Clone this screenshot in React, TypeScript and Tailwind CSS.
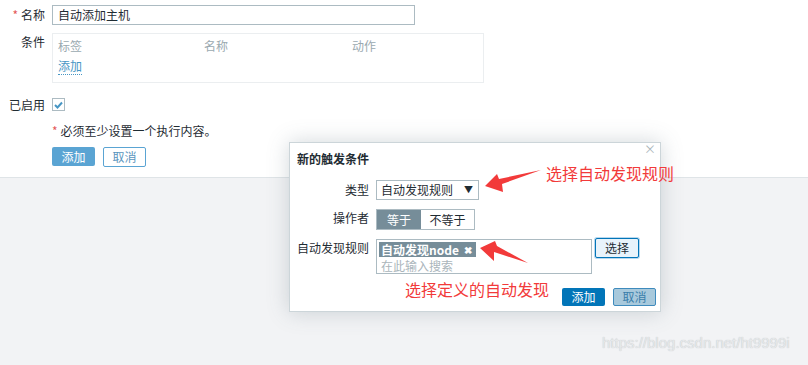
import React from 'react';

const font = { fontFamily: '"Noto Sans CJK SC", "Liberation Sans", sans-serif' };

function Label({ children, required }: { children: React.ReactNode; required?: boolean }) {
  return (
    <div className="text-right whitespace-nowrap text-[12px] leading-[14px] text-[#1f2c33]">
      {required && <span className="text-[#e45959] mr-[3px]">*</span>}
      {children}
    </div>
  );
}

function MainForm() {
  return (
    <div className="bg-white border-b border-[#dfe4e7] h-[178px] pt-[5px]">
      <div className="grid grid-cols-[45px_1fr] gap-x-[7px]">
        <div className="pt-[3px]">
          <Label required>名称</Label>
        </div>
        <div className="w-[363px] h-[20px] border border-[#acbbc2] px-[5px] text-[12px] leading-[18px] text-[#1f2c33]">
          自动添加主机
        </div>

        <div className="pt-[2px] mt-[8px]">
          <Label>条件</Label>
        </div>
        <div className="mt-[8px] w-[432px] h-[50px] border border-[#ebeef0] px-[5px] pt-[5px]">
          <div className="flex text-[12px] leading-[14px] text-[#9aa9b0]">
            <span className="w-[146px]">标签</span>
            <span className="w-[148px]">名称</span>
            <span>动作</span>
          </div>
          <div className="mt-[6px] text-[12px] leading-[14px]">
            <span className="text-[#4796c4] border-b border-dotted border-[#4796c4]">添加</span>
          </div>
        </div>

        <div className="mt-[15px]">
          <Label>已启用</Label>
        </div>
        <div className="mt-[15px]">
          <div className="w-[13px] h-[13px] border border-[#acbbc2] flex items-center justify-center">
            <svg width="9" height="8" viewBox="0 0 9 8">
              <path d="M1 4 L3.5 6.5 L8 1.5" fill="none" stroke="#4796c4" strokeWidth="2" />
            </svg>
          </div>
        </div>

        <div />
        <div className="mt-[12px] text-[12px] leading-[14px] text-[#1f2c33]">
          <span className="text-[#e45959] mr-[3px]">*</span>必须至少设置一个执行内容。
        </div>

        <div />
        <div className="mt-[9px] flex gap-[8px]">
          <div className="w-[43px] h-[19px] bg-[#5aa4d3] text-white text-[12px] leading-[19px] text-center rounded-[2px]">
            添加
          </div>
          <div className="w-[43px] h-[20px] border border-[#5aa4d3] text-[#5a95bd] text-[12px] leading-[18px] text-center rounded-[2px]">
            取消
          </div>
        </div>
      </div>
    </div>
  );
}

function Dialog() {
  return (
    <div className="absolute left-[289px] top-[142px] w-[372px] h-[170px] bg-white border border-[#ccd5d9] shadow-[0_0_20px_rgba(80,100,110,0.25)] pl-[7px] pr-[4px] pt-[9px]">
      <div className="absolute right-[4px] top-0 text-[#aab5bb] text-[12px] leading-[12px]">×</div>
      <div className="text-[12px] leading-[14px] font-bold text-[#1f2c33]">新的触发条件</div>

      <div className="grid grid-cols-[72px_1fr] gap-x-[7px] mt-[14px]">
        <div className="pt-[3px]">
          <Label>类型</Label>
        </div>
        <div className="w-[103px] h-[20px] border border-[#acbbc2] pl-[4px] pr-[5px] flex items-center justify-between text-[12px] text-[#1f2c33]">
          <span className="leading-[14px]">自动发现规则</span>
          <span className="text-[9px] leading-[10px]">▼</span>
        </div>

        <div className="pt-[2px] mt-[9px]">
          <Label>操作者</Label>
        </div>
        <div className="mt-[9px] flex h-[21px] border border-[#acbbc2] w-[99px] text-[12px]">
          <div className="w-[44px] bg-[#768d99] text-white text-center leading-[19px]">等于</div>
          <div className="flex-1 text-center leading-[19px] text-[#1f2c33]">不等于</div>
        </div>

        <div className="pt-[2px] mt-[9px]">
          <Label>自动发现规则</Label>
        </div>
        <div className="mt-[9px] flex items-start gap-[3px]">
          <div className="w-[216px] h-[35px] border border-[#acbbc2] pl-[2px] pt-[2px] flex flex-col items-start">
            <div className="flex items-center h-[15px] bg-[#768d99] text-white text-[12px] font-bold pl-[2px] pr-[4px] leading-[14px]">
              自动发现node<span className="ml-[5px] text-[10px]">✖</span>
            </div>
            <div className="text-[12px] leading-[14px] text-[#aab5bb] pl-[2px] mt-[2px]">在此输入搜索</div>
          </div>
          <div className="-mt-[1px] w-[44px] h-[20px] bg-[#e8f3fb] border border-[#0275b8] rounded-[2px] shadow-[0_0_0_1px_#b9d8ee] text-[12px] leading-[18px] text-center text-[#1f2c33]">
            选择
          </div>
        </div>
      </div>

      <div className="flex justify-end gap-[8px] mt-[14px]">
        <div className="w-[43px] h-[18px] bg-[#0275b8] text-white text-[12px] leading-[18px] text-center rounded-[2px]">添加</div>
        <div className="w-[43px] h-[18px] bg-[#a8c9dc] border border-[#3f8bbd] text-[#3a7eaa] text-[12px] leading-[16px] text-center rounded-[2px]">取消</div>
      </div>
    </div>
  );
}

export default function App() {
  return (
    <div className="relative w-[808px] h-[365px] bg-[#f2f3f5] overflow-hidden" style={font}>
      <MainForm />
      <Dialog />

      <svg className="absolute left-0 top-0 pointer-events-none" width="808" height="365">
        <polygon points="485,186 497,174 499,179 541,170 502,184 503,192" fill="#f23a3a" />
        <polygon points="480,248 495,241 497,246 528,263 494,252 494,261" fill="#f23a3a" />
      </svg>

      <div className="absolute left-[546px] top-[163px] text-[16px] leading-[20px] text-[#f23a3a]">选择自动发现规则</div>
      <div className="absolute left-[405px] top-[279px] text-[16px] leading-[20px] text-[#f23a3a]">选择定义的自动发现</div>

      <div
        className="absolute left-[602px] top-[334px] text-[15px] leading-[18px] text-[#e6e8ea] [text-shadow:0_0_1px_#b8bcc0]"
        style={{ fontFamily: '"Liberation Sans", sans-serif' }}
      >
        https://blog.csdn.net/ht9999i
      </div>
    </div>
  );
}
